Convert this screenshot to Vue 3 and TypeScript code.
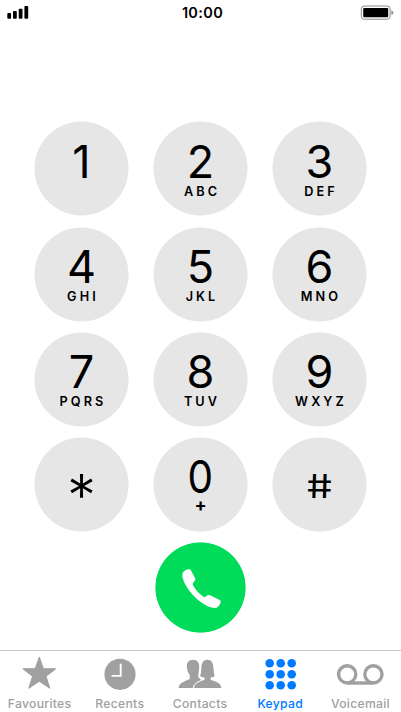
<script setup lang="ts">
interface Key {
  digit: string
  letters?: string
  kind?: string
}

const keys: Key[] = [
  { digit: '1' },
  { digit: '2', letters: 'ABC' },
  { digit: '3', letters: 'DEF' },
  { digit: '4', letters: 'GHI' },
  { digit: '5', letters: 'JKL' },
  { digit: '6', letters: 'MNO' },
  { digit: '7', letters: 'PQRS' },
  { digit: '8', letters: 'TUV' },
  { digit: '9', letters: 'WXYZ' },
  { digit: '*', kind: 'star' },
  { digit: '0', letters: '+', kind: 'zero' },
  { digit: '#', kind: 'hash' },
]

const tabs: string[] = ['Favourites', 'Recents', 'Contacts', 'Keypad', 'Voicemail']
const active = 'Keypad'
const dots: number[] = [7.3, 18.3, 29.3]
</script>

<template>
  <div class="phone">
    <header class="status">
      <svg class="signal" width="24" height="14" viewBox="0 0 24 14">
        <rect x="0.3" y="7" width="3.8" height="5.8" rx="1" />
        <rect x="6" y="5" width="3.8" height="7.8" rx="1" />
        <rect x="11.7" y="2.7" width="3.8" height="10.1" rx="1" />
        <rect x="17.4" y="0" width="3.8" height="12.8" rx="1" />
      </svg>
      <time class="clock">10:00</time>
      <svg class="battery" width="34" height="16" viewBox="0 0 34 16">
        <rect x="1.3" y="1" width="28.8" height="13.2" rx="3" fill="none" stroke="#8c8c8c" stroke-width="1" />
        <rect x="3.2" y="2.9" width="25" height="9.4" rx="1" />
        <path d="M31.4 5.3q2 .6 2 2.4t-2 2.4z" fill="#8c8c8c" />
      </svg>
    </header>

    <main class="keypad">
      <button v-for="key in keys" :key="key.digit" class="key" :class="key.kind">
        <span class="digit">{{ key.digit }}</span>
        <span v-if="key.letters" class="letters">{{ key.letters }}</span>
      </button>
    </main>

    <div class="call-row">
      <button class="call" aria-label="Call">
        <svg width="42" height="42" viewBox="88.5 87 126 126">
          <path d="M98 102Q105 95 114 94Q119 93 122 98L134 121Q137 126 130 132Q125 137 127 141Q141 165 159 176Q163 179 168 174Q173 169 179 172L206 185Q213 188 210 194Q207 203 201 208Q194 212 180 208C145 196 105 155 96 118Q94 107 98 102Z" fill="#fff" />
        </svg>
      </button>
    </div>

    <nav class="tabs">
      <a v-for="tab in tabs" :key="tab" class="tab" :class="{ active: tab === active }">
        <svg width="48" height="36" viewBox="0 0 48 36" fill="currentColor">
          <path v-if="tab === 'Favourites'" d="M23.3 1.4L27.3 12.8H39.4L29.9 20.2L33.7 32.1L23.3 25L12.9 32.1L16.7 20.2L7.2 12.8H19.3Z" stroke="currentColor" stroke-width="1.2" stroke-linejoin="round" />
          <template v-else-if="tab === 'Recents'">
            <circle cx="24" cy="18.3" r="15.6" />
            <path d="M24.7 7.7V19.9H15.5" fill="none" stroke="#fff" stroke-width="1.9" />
          </template>
          <template v-else-if="tab === 'Contacts'">
            <path d="M17 3.8C12.8 3.8 10.6 6.7 10.8 10.6C11 14.2 12 17 13.8 19.2V22.5C13.5 24.5 3.2 25 2.5 32H17.2C18 27.8 23.8 26.3 25.3 24.2L22 20.5C22.5 18 23.1 15.5 23.2 10.6C23.4 6.7 21.2 3.8 17 3.8Z" />
            <path d="M31.4 3.8C26.5 3.8 25.4 8 25.3 12.5Q25.2 17 24.1 20Q26 21.5 28.6 21.6V23.2C28 25.3 18.6 25 18 32H45.4C44.8 25 35.2 25.3 34.6 23.2V21.6Q37.2 21.5 38.8 20Q37.6 17 37.5 12.5C37.3 7 35.5 3.8 31.4 3.8Z" stroke="#fff" stroke-width="2.2" paint-order="stroke" />
          </template>
          <template v-else-if="tab === 'Keypad'">
            <template v-for="y in dots" :key="y">
              <circle v-for="x in dots" :key="x" :cx="x + 5.4" :cy="y" r="4.3" />
            </template>
          </template>
          <g v-else fill="none" stroke="currentColor" stroke-width="3.4">
            <circle cx="10.2" cy="18.3" r="8.6" />
            <circle cx="36.4" cy="18.3" r="8.6" />
            <path d="M10.2 27H36.4" />
          </g>
        </svg>
        <span class="label">{{ tab }}</span>
      </a>
    </nav>
  </div>
</template>

<style>
body {
  background: #fff;
}
</style>

<style scoped>
.phone {
  display: flex;
  flex-direction: column;
  box-sizing: border-box;
  width: 401px;
  height: 712px;
  overflow: hidden;
  background: #fff;
  color: #000;
  font-family: Inter, "Liberation Sans", sans-serif;
}
.status {
  display: grid;
  grid-template-columns: 1fr auto 1fr;
  align-items: center;
  height: 26px;
  padding: 0 7px;
}
.clock {
  padding: 0 0 0 4px;
  font-size: 14.5px;
  line-height: 16px;
  font-weight: 600;
  letter-spacing: 0.35px;
}
.battery {
  justify-self: end;
}
.keypad {
  display: grid;
  grid-template-columns: repeat(3, 95px);
  grid-auto-rows: 95px;
  gap: 10.3px 24px;
  justify-content: center;
  margin-top: 95.3px;
}
button {
  border: 0;
  margin: 0;
  padding: 0;
  color: inherit;
  font-family: inherit;
}
.key {
  display: flex;
  flex-direction: column;
  align-items: center;
  justify-content: flex-start;
  background: radial-gradient(circle at center, #e6e6e6 46.6px, transparent 47.4px);
}
.digit {
  margin-top: 23.3px;
  font-size: 45px;
  line-height: 33px;
  font-weight: 400;
}
.letters {
  margin-top: 6.1px;
  margin-right: -3px;
  font-size: 12.7px;
  line-height: 16px;
  font-weight: 600;
  letter-spacing: 3.1px;
}
.zero .letters {
  margin: 3.3px 0 0;
  font-size: 18px;
  letter-spacing: 0;
  font-weight: 700;
}
.zero .digit {
  transform: scaleX(0.9);
}
.star .digit {
  margin-top: 42.3px;
  font-size: 58px;
  font-weight: 300;
}
.hash .digit {
  margin-top: 33px;
  font-size: 33px;
  font-weight: 400;
  transform: scaleX(1.25) skewX(8deg);
}
.call-row {
  display: flex;
  justify-content: center;
  margin-top: 10.3px;
}
.call {
  display: flex;
  align-items: center;
  justify-content: center;
  width: 91px;
  height: 91px;
  background: radial-gradient(circle at center, #00dc5a 44.7px, transparent 45.5px);
}
.tabs {
  display: grid;
  grid-template-columns: repeat(5, 1fr);
  box-sizing: border-box;
  height: 62px;
  margin-top: auto;
  padding-top: 5px;
  border-top: 1px solid #c8c8c8;
}
.tab {
  display: flex;
  flex-direction: column;
  align-items: center;
  color: #a0a0a0;
}
.label {
  margin: 3.7px 0 0 -1px;
  font-size: 12.2px;
  line-height: 16px;
  font-weight: 500;
  letter-spacing: 0.28px;
}
.active {
  color: #007aff;
}
</style>
